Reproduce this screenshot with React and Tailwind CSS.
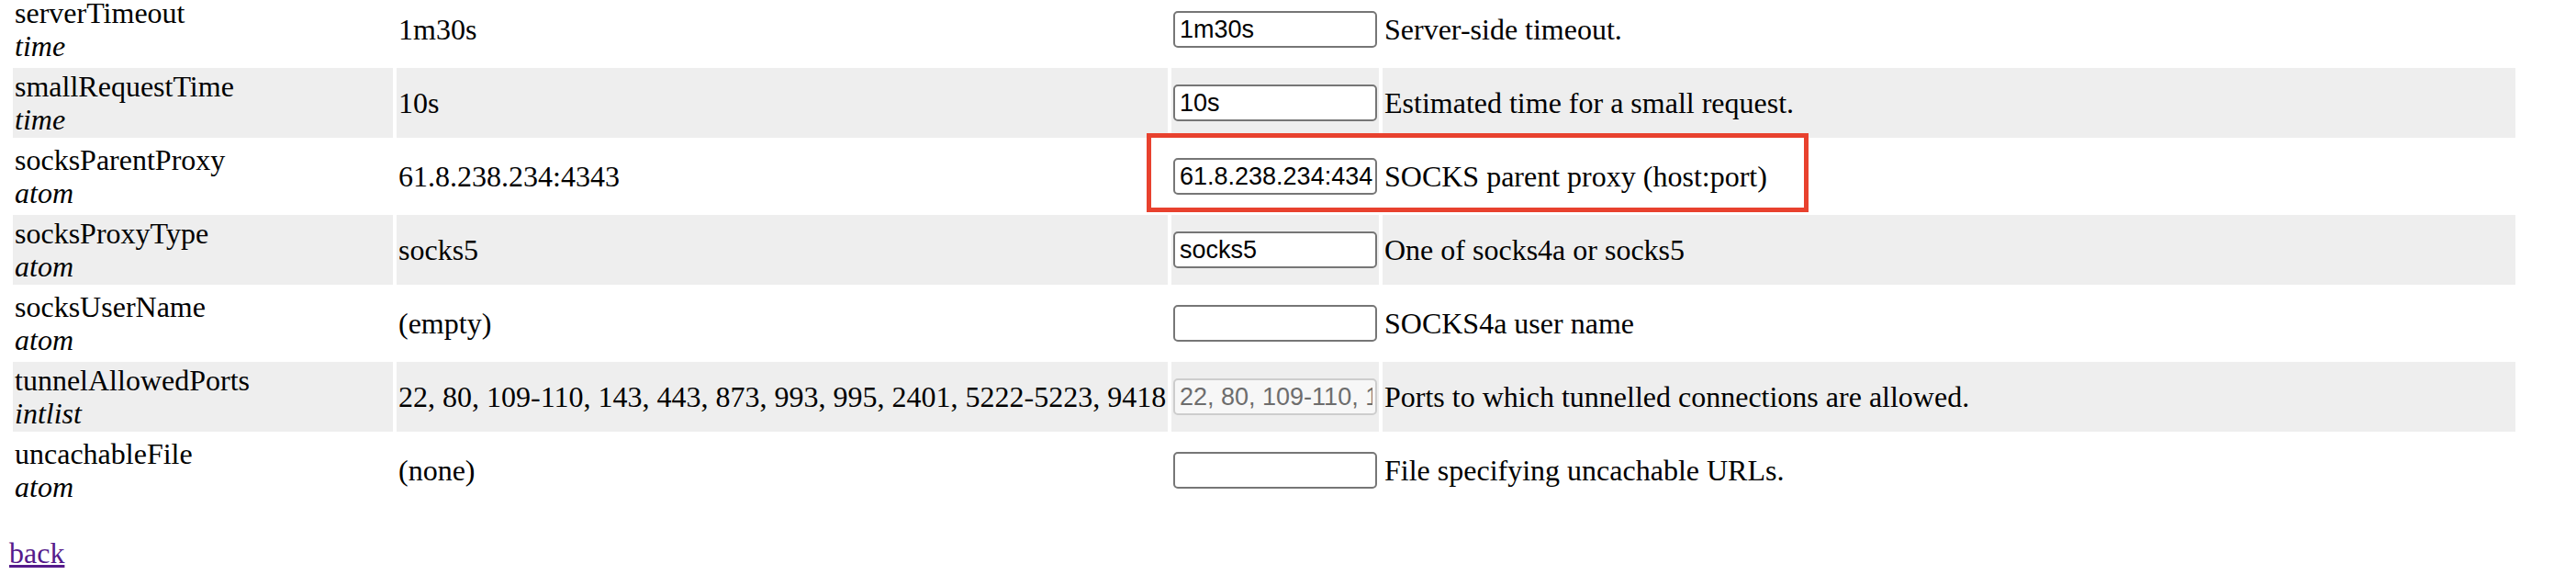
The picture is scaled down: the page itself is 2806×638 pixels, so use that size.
import React from "react";

const PORTS = "22, 80, 109-110, 143, 443, 873, 993, 995, 2401, 5222-5223, 9418";

const rows = [
  { name: "serverTimeout", type: "time", value: "1m30s", input: "1m30s", desc: "Server-side timeout." },
  { name: "smallRequestTime", type: "time", value: "10s", input: "10s", desc: "Estimated time for a small request." },
  { name: "socksParentProxy", type: "atom", value: "61.8.238.234:4343", input: "61.8.238.234:4343", desc: "SOCKS parent proxy (host:port)" },
  { name: "socksProxyType", type: "atom", value: "socks5", input: "socks5", desc: "One of socks4a or socks5" },
  { name: "socksUserName", type: "atom", value: "(empty)", input: "", desc: "SOCKS4a user name" },
  { name: "tunnelAllowedPorts", type: "intlist", value: PORTS, input: PORTS, desc: "Ports to which tunnelled connections are allowed.", disabled: true },
  { name: "uncachableFile", type: "atom", value: "(none)", input: "", desc: "File specifying uncachable URLs." },
];

function ConfigRow({ row, odd }) {
  const bg = odd ? "bg-[#eeeeee]" : "bg-white";
  return (
    <tr>
      <td className={`${bg} h-[76px] p-[2px] align-middle`}>
        <div>{row.name}</div>
        <div className="italic">{row.type}</div>
      </td>
      <td className={`${bg} p-[2px] align-middle whitespace-nowrap overflow-hidden`}>{row.value}</td>
      <td className={`${bg} p-[2px] align-middle`}>
        <input
          type="text"
          readOnly
          disabled={row.disabled}
          value={row.input}
          className={`block w-[222px] h-[40px] pl-[5px] pr-[3px] rounded-[5px] border-2 text-[27px] leading-[30px] font-['Liberation_Sans',Arial,sans-serif] outline-none ${
            row.disabled
              ? "bg-[#f7f7f7] border-[#cdcdcd] text-[#6d6d6d]"
              : "bg-white border-[#767676] text-black"
          }`}
        />
      </td>
      <td className={`${bg} p-[2px] align-middle whitespace-nowrap`}>{row.desc}</td>
    </tr>
  );
}

export default function App() {
  return (
    <div className="min-h-screen bg-white pl-[10px] text-black text-[32px] leading-[36px] font-['Liberation_Serif','Times_New_Roman',serif] overflow-hidden">
      <div className="relative -mt-[10px]">
        <table className="table-fixed border-separate border-spacing-[4px] w-[2734px]">
          <colgroup>
            <col className="w-[414px]" />
            <col className="w-[840px]" />
            <col className="w-[226px]" />
            <col className="w-[1234px]" />
          </colgroup>
          <tbody>
            {rows.map((row, i) => (
              <ConfigRow key={row.name} row={row} odd={i % 2 === 1} />
            ))}
          </tbody>
        </table>

        {/* highlight around the socksParentProxy field */}
        <div className="absolute left-[1239px] top-[155px] w-[721px] h-[86px] border-[5px] border-[#e8412e] pointer-events-none" />
      </div>

      <p className="mt-[30px]">
        <a href="#" className="underline text-[#551a8b]">back</a>
      </p>
    </div>
  );
}
